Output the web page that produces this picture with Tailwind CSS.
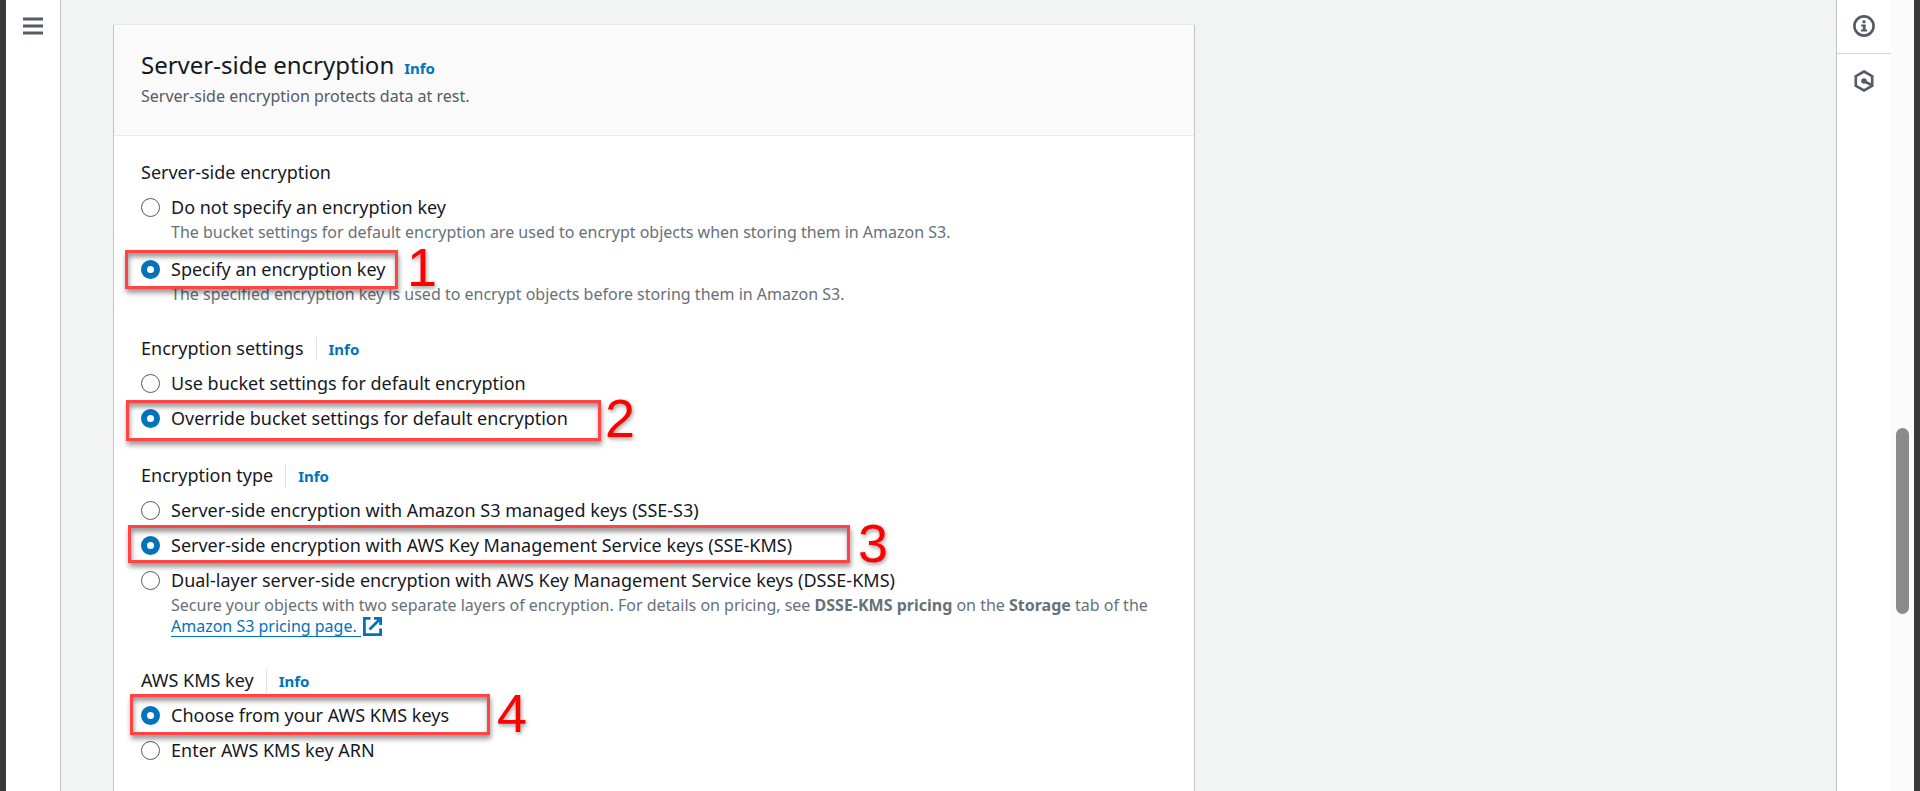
<!DOCTYPE html>
<html lang="en">
<head>
<meta charset="utf-8">
<title>Server-side encryption</title>
<script src="https://cdn.jsdelivr.net/npm/@tailwindcss/browser@4"></script>
</head>
<body class="flex h-screen overflow-hidden border-x-[6px] border-[#3a3a3a] bg-[#f2f3f3] font-['Noto_Sans',sans-serif] text-lg/[27px] text-[#16191f]">

<nav class="w-[55px] shrink-0 border-r border-[#bfc6c8] bg-white pt-3">
  <button aria-label="Open navigation" class="ml-[17px] block">
    <svg class="block" width="20" height="28" viewBox="0 0 20 28" fill="none" stroke="#545b64" stroke-width="3"><path d="M0 7h20M0 14h20M0 21h20"/></svg>
  </button>
</nav>

<main class="min-w-0 flex-1 pt-[25px] pl-[52px]">
  <section class="h-full max-w-[1082px] border-x border-[#bfc6c8] bg-white shadow-[0_-1px_0_#e6e9e9]">
    <header class="border-b border-[#e6eaea] bg-[#fafafa] px-[27px] pt-6 pb-[28px]">
      <div class="flex items-baseline gap-[10px]">
        <h2 class="text-2xl/[32px]">Server-side encryption</h2>
        <a href="#" class="text-[15px]/[21px] font-bold text-[#0073bb]">Info</a>
      </div>
      <p class="mt-[5px] text-base/[21px] text-[#545b64]">Server-side encryption protects data at rest.</p>
    </header>

    <form class="flex flex-col gap-[30px] px-[27px] pt-[23px]">
      <fieldset>
        <legend class="mb-2">Server-side encryption</legend>
        <div class="flex flex-col gap-[13px]">
          <div>
            <label class="flex items-center gap-[11px]"><input type="radio" name="sse" class="size-[19px] appearance-none rounded-full border border-[#545b64] checked:border-[6px] checked:border-[#0073bb]">Do not specify an encryption key</label>
            <p class="mt-px pl-[30px] text-base/[21px] text-[#687078]">The bucket settings for default encryption are used to encrypt objects when storing them in Amazon S3.</p>
          </div>
          <div class="relative">
            <label class="flex items-center gap-[11px]"><input type="radio" name="sse" checked class="size-[19px] appearance-none rounded-full border border-[#545b64] checked:border-[6px] checked:border-[#0073bb]">Specify an encryption key</label>
            <p class="mt-px pl-[30px] text-base/[21px] text-[#687078]">The specified encryption key is used to encrypt objects before storing them in Amazon S3.</p>
            <div class="pointer-events-none absolute -top-[6px] -left-4 h-[39px] w-[273px] border-3 border-[#ff4444] shadow-[1px_4px_5px_rgba(0,0,0,0.4),inset_1px_4px_5px_rgba(0,0,0,0.4)]"></div>
            <span class="absolute -top-2 left-[266px] font-['Liberation_Sans',sans-serif] text-[54px]/[38px] text-[#ff0000] [text-shadow:1px_2px_4px_rgba(0,0,0,0.4)]">1</span>
          </div>
        </div>
      </fieldset>

      <fieldset>
        <legend class="mb-2 flex items-center"><span>Encryption settings</span><a href="#" class="ml-3 border-l border-[#e1e4e4] pl-3 text-[15px]/[24px] font-bold text-[#0073bb]">Info</a></legend>
        <div class="flex flex-col gap-2">
          <label class="flex items-center gap-[11px]"><input type="radio" name="settings" class="size-[19px] appearance-none rounded-full border border-[#545b64] checked:border-[6px] checked:border-[#0073bb]">Use bucket settings for default encryption</label>
          <div class="relative">
            <label class="flex items-center gap-[11px]"><input type="radio" name="settings" checked class="size-[19px] appearance-none rounded-full border border-[#545b64] checked:border-[6px] checked:border-[#0073bb]">Override bucket settings for default encryption</label>
            <div class="pointer-events-none absolute -top-[5px] -left-[15px] h-[41px] w-[475px] border-3 border-[#ff4444] shadow-[1px_4px_5px_rgba(0,0,0,0.4),inset_1px_4px_5px_rgba(0,0,0,0.4)]"></div>
            <span class="absolute -top-[6px] left-[464px] font-['Liberation_Sans',sans-serif] text-[54px]/[38px] text-[#ff0000] [text-shadow:1px_2px_4px_rgba(0,0,0,0.4)]">2</span>
          </div>
        </div>
      </fieldset>

      <fieldset>
        <legend class="mb-2 flex items-center"><span>Encryption type</span><a href="#" class="ml-3 border-l border-[#e1e4e4] pl-3 text-[15px]/[24px] font-bold text-[#0073bb]">Info</a></legend>
        <div class="flex flex-col gap-2">
          <label class="flex items-center gap-[11px]"><input type="radio" name="type" class="size-[19px] appearance-none rounded-full border border-[#545b64] checked:border-[6px] checked:border-[#0073bb]">Server-side encryption with Amazon S3 managed keys (SSE-S3)</label>
          <div class="relative">
            <label class="flex items-center gap-[11px]"><input type="radio" name="type" checked class="size-[19px] appearance-none rounded-full border border-[#545b64] checked:border-[6px] checked:border-[#0073bb]">Server-side encryption with AWS Key Management Service keys (SSE-KMS)</label>
            <div class="pointer-events-none absolute -top-[7px] -left-[13px] h-[38px] w-[722px] border-3 border-[#ff4444] shadow-[1px_4px_5px_rgba(0,0,0,0.4),inset_1px_4px_5px_rgba(0,0,0,0.4)]"></div>
            <span class="absolute -top-2 left-[717px] font-['Liberation_Sans',sans-serif] text-[54px]/[38px] text-[#ff0000] [text-shadow:1px_2px_4px_rgba(0,0,0,0.4)]">3</span>
          </div>
          <div>
            <label class="flex items-center gap-[11px]"><input type="radio" name="type" class="size-[19px] appearance-none rounded-full border border-[#545b64] checked:border-[6px] checked:border-[#0073bb]">Dual-layer server-side encryption with AWS Key Management Service keys (DSSE-KMS)</label>
            <p class="mt-px pl-[30px] text-base/[21px] text-[#687078]">Secure your objects with two separate layers of encryption. For details on pricing, see <b>DSSE-KMS pricing</b> on the <b>Storage</b> tab of the<br>
              <a href="#" class="inline-flex h-[21px] items-center gap-0.5 align-top text-[#0073bb]"><span class="border-b border-[#0073bb] pr-1 leading-[19px]">Amazon S3 pricing page.</span><svg width="19" height="19" viewBox="0 0 19 19" fill="none" stroke="#0073bb" stroke-width="2.800"><path d="M7.500 1.400H1.400v16.200h16.200V11.500M11 1.400h6.600V8M17.500 1.500L6.500 12.500"/></svg></a></p>
          </div>
        </div>
      </fieldset>

      <fieldset>
        <legend class="mb-2 flex items-center"><span>AWS KMS key</span><a href="#" class="ml-3 border-l border-[#e1e4e4] pl-3 text-[15px]/[24px] font-bold text-[#0073bb]">Info</a></legend>
        <div class="flex flex-col gap-2">
          <div class="relative">
            <label class="flex items-center gap-[11px]"><input type="radio" name="kms" checked class="size-[19px] appearance-none rounded-full border border-[#545b64] checked:border-[6px] checked:border-[#0073bb]">Choose from your AWS KMS keys</label>
            <div class="pointer-events-none absolute -top-2 -left-[11px] h-[41px] w-[360px] border-3 border-[#ff4444] shadow-[1px_4px_5px_rgba(0,0,0,0.4),inset_1px_4px_5px_rgba(0,0,0,0.4)]"></div>
            <span class="absolute -top-2 left-[356px] font-['Liberation_Sans',sans-serif] text-[54px]/[38px] text-[#ff0000] [text-shadow:1px_2px_4px_rgba(0,0,0,0.4)]">4</span>
          </div>
          <label class="flex items-center gap-[11px]"><input type="radio" name="kms" class="size-[19px] appearance-none rounded-full border border-[#545b64] checked:border-[6px] checked:border-[#0073bb]">Enter AWS KMS key ARN</label>
        </div>
      </fieldset>
    </form>
  </section>
</main>

<aside class="w-[55px] shrink-0 border-l border-[#bfc6c8] bg-white">
  <button aria-label="Info panel" class="flex h-[54px] w-full items-center justify-center border-b border-[#d0d5d6] pr-px pb-0.5">
    <svg width="22" height="22" viewBox="0 0 22 22" fill="none" stroke="#545b64"><circle cx="11" cy="11" r="9.600" stroke-width="2.600"/><path d="M9.500 6.800h3" stroke-width="2.800"/><path d="M8.200 10.600h4.300M8 15.400h6" stroke-width="2"/><path d="M11.200 10v5" stroke-width="2.800"/></svg>
  </button>
  <button aria-label="Resources panel" class="flex h-[54px] w-full items-center justify-center pr-px">
    <svg width="22" height="22" viewBox="0 0 22 22" fill="none" stroke="#545b64" stroke-width="2.600"><path d="M11 1.500L19.200 6.200v9.600L11 20.500L2.800 15.800V6.200z"/><circle cx="11" cy="11" r="2.800" fill="#545b64" stroke="none"/><path d="M11 11l8 4.300"/></svg>
  </button>
</aside>

<!-- Scrollbar track and thumb -->
<div class="w-[23px] shrink-0 bg-[#fbfbfb] px-[5px] pt-[428px]">
  <div class="h-[186px] rounded-full bg-[#8b8b8b]"></div>
</div>
</body>
</html>
